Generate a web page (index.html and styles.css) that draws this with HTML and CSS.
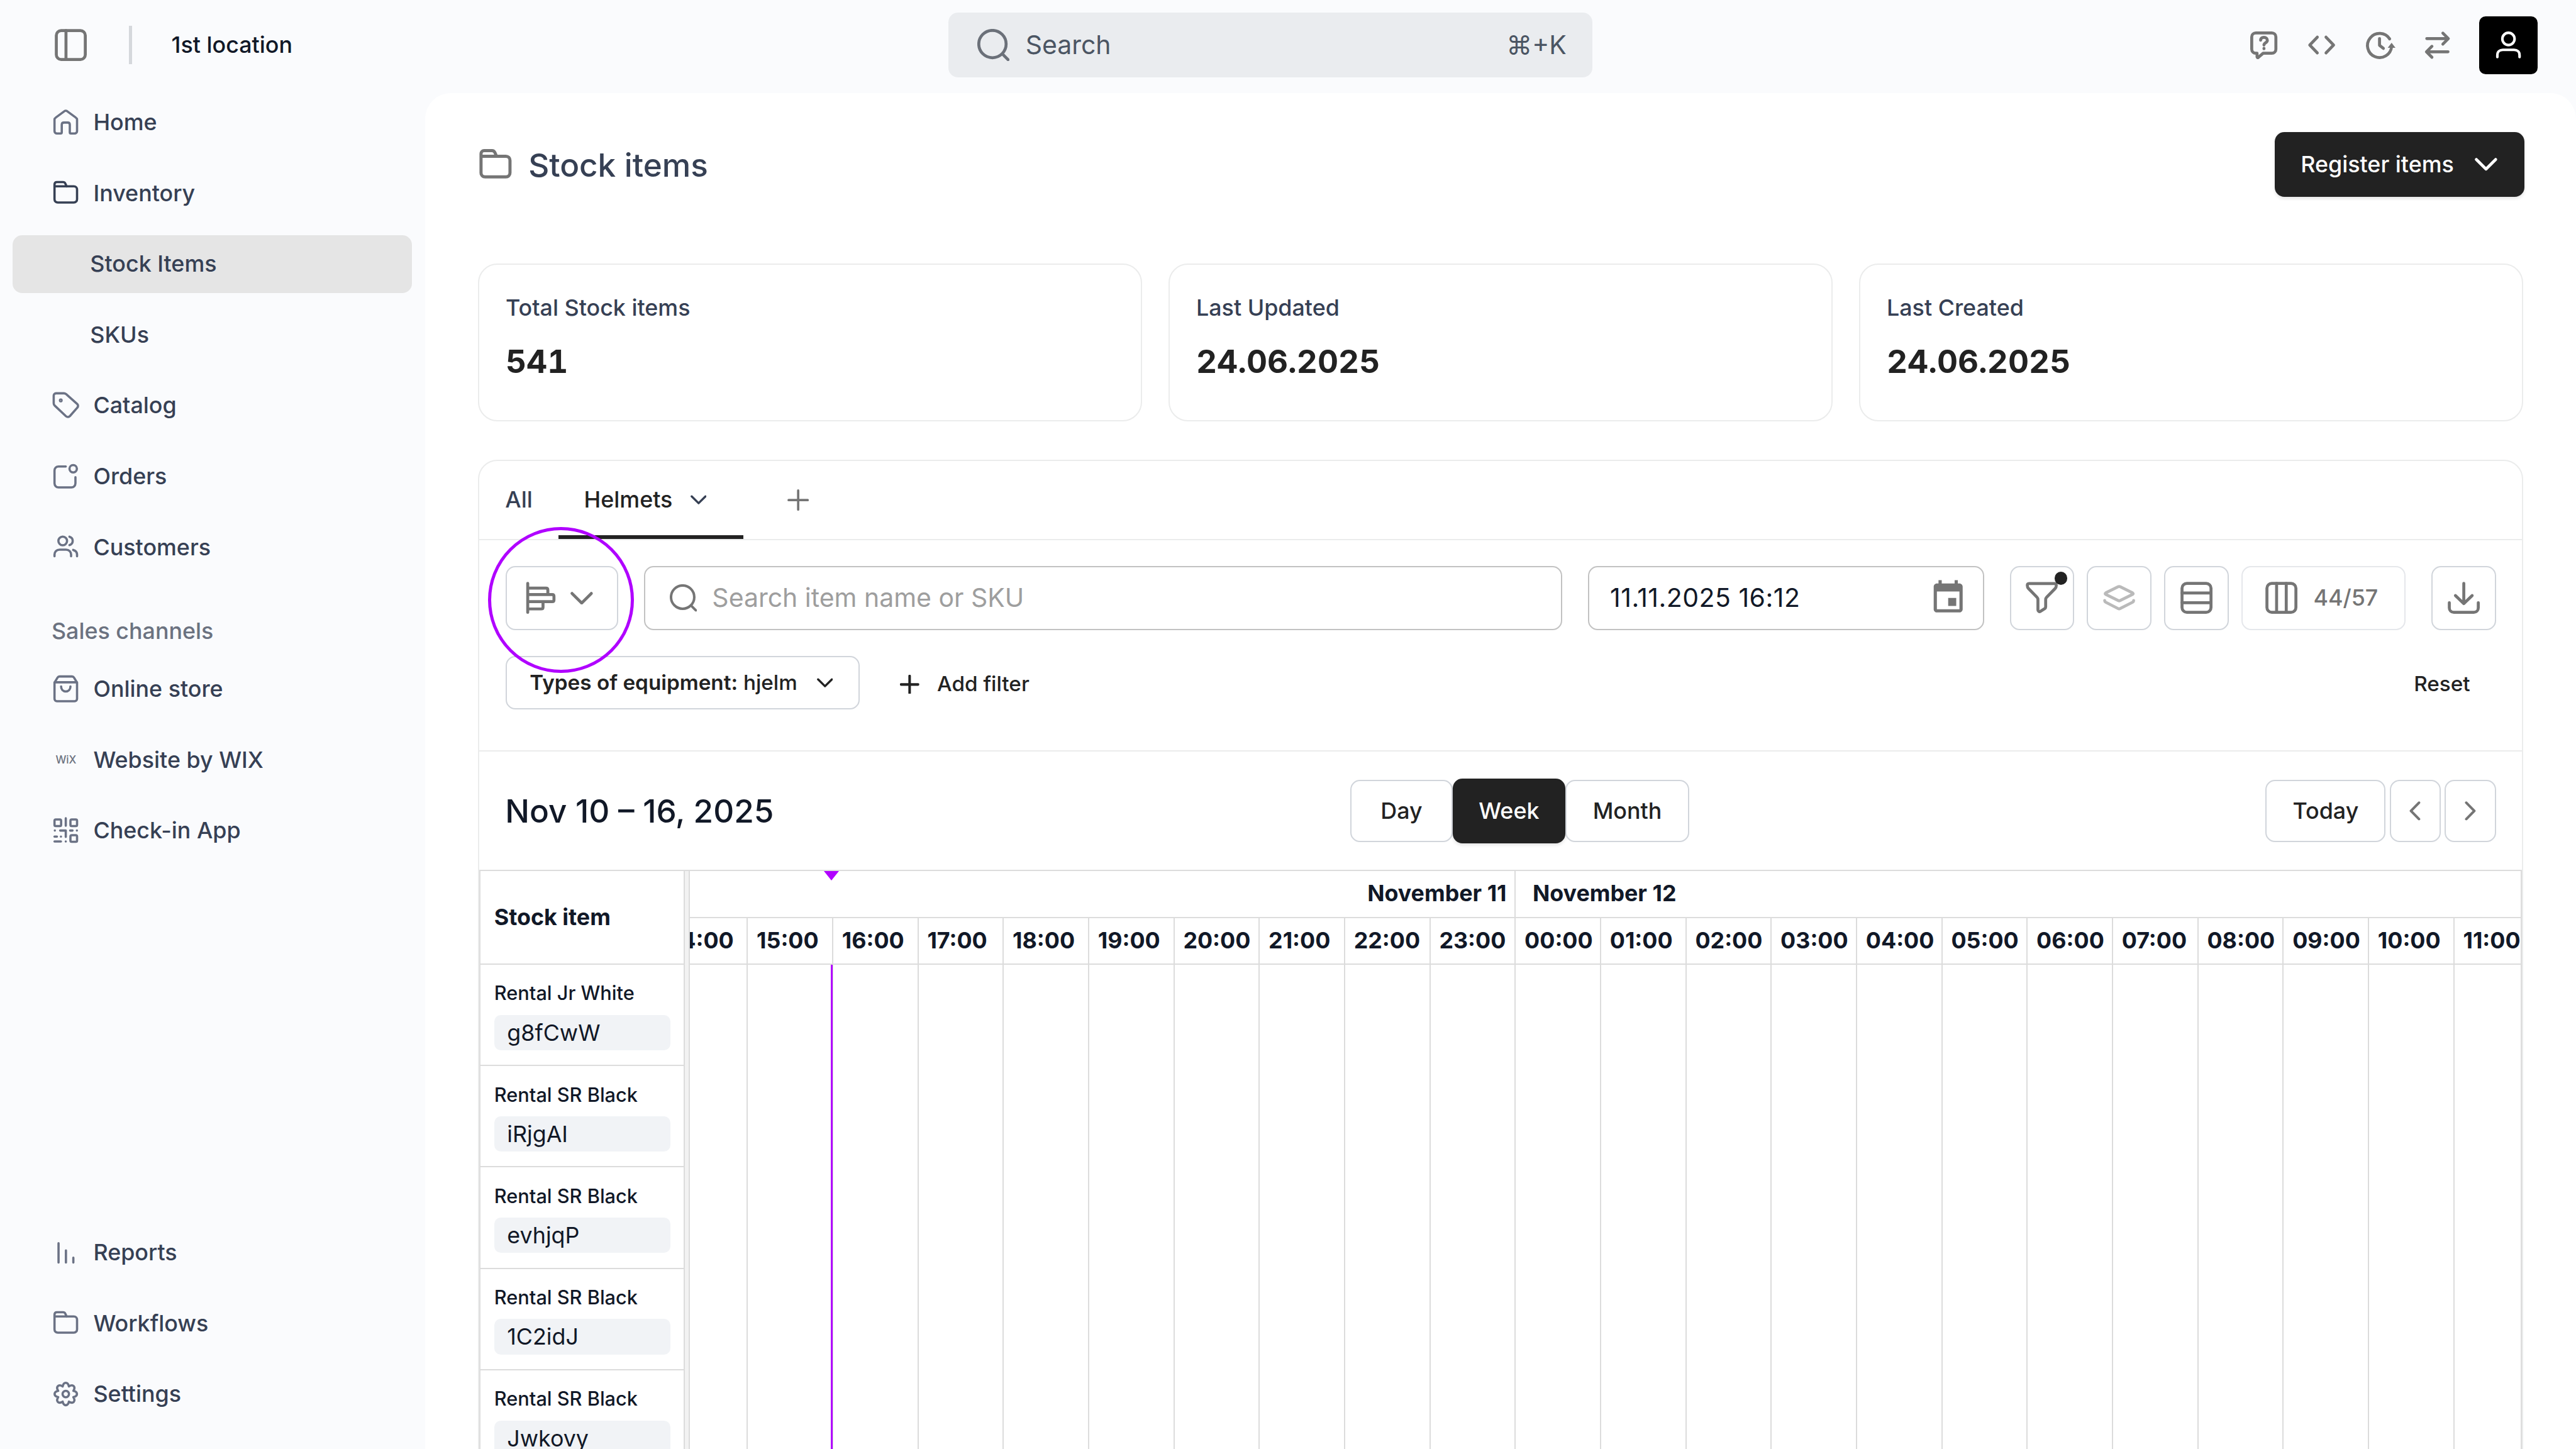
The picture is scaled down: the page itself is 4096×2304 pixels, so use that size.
FILE: index.html
```html
<!DOCTYPE html>
<html lang="en">
<head>
  <meta charset="UTF-8">
  <title>Stock items</title>
  <meta name="viewport" content="width=device-width, initial-scale=1.0">
  <link rel="stylesheet" href="styles.css">
</head>
<body>
  <!-- icon sprite -->
  <svg class="sprite" aria-hidden="true">
    <symbol id="i-panel" viewBox="0 0 20 20"><rect x="1" y="1" width="18" height="18" rx="3"/><path d="M7 1v18"/></symbol>
    <symbol id="i-home" viewBox="0 0 20 20"><path d="M3 8.3c0-.6.3-1 .8-1.3l5.6-4.1c.4-.2.8-.2 1.2 0L16.2 7c.5.3.8.7.8 1.3v7.1c0 .9-.7 1.5-1.5 1.5h-2.3c-.4 0-.7-.3-.7-.7v-4.8c0-.8-.5-1.3-1.3-1.3H8.8c-.8 0-1.3.5-1.3 1.3v4.8c0 .4-.3.7-.7.7H4.5c-.8 0-1.5-.6-1.5-1.5z"/></symbol>
    <symbol id="i-folder" viewBox="0 0 20 20"><path d="M3 5.6v8c0 1.2.8 2 2 2h10c1.2 0 2-.8 2-2v-6c0-1.2-.8-2-2-2H3M3 5.6V4.4c0-.9.6-1.5 1.5-1.5h3.8c.6 0 1.1.3 1.4.9l.8 1.8"/></symbol>
    <symbol id="i-tag" viewBox="0 0 20 20"><path d="M3.9 2.5h5c.5 0 .9.2 1.3.5l6.9 6.1c.7.7.7 1.7 0 2.4l-4.5 5.1c-.7.7-1.7.8-2.4.2L3.1 10.1c-.4-.4-.6-.9-.6-1.4V3.9c0-.8.6-1.4 1.4-1.4z"/><circle cx="6.9" cy="6.9" r=".5"/></symbol>
    <symbol id="i-orders" viewBox="0 0 20 20"><path d="M10 3.8H5.5C4.1 3.8 3 4.9 3 6.3v8c0 1.4 1.1 2.5 2.5 2.5h8c1.4 0 2.5-1.1 2.5-2.5v-3.8"/><circle cx="14.6" cy="5.2" r="2.3"/></symbol>
    <symbol id="i-users" viewBox="0 0 20 20"><circle cx="8.1" cy="5.9" r="2.7"/><path d="M3 15.4v-1c0-1.8 1.3-3.1 3.1-3.1h4.1c1.8 0 3.1 1.3 3.1 3.1v1M12.3 3.3c1.2.3 2 1.3 2 2.6s-.8 2.3-2 2.6M14.6 11.5c1.4.4 2.4 1.5 2.4 2.9v1"/></symbol>
    <symbol id="i-bag" viewBox="0 0 20 20"><path d="M3 6l1.9-3.1c.3-.5.7-.7 1.2-.7h7.8c.5 0 .9.2 1.2.7L17 6v10c0 .9-.6 1.6-1.5 1.6h-11C3.6 17.6 3 16.9 3 16zM3 5.8h14M7.1 8.4c0 1.9 1.2 3.1 2.9 3.1s2.9-1.2 2.9-3.1"/></symbol>
    <symbol id="i-qr" viewBox="0 0 20 20"><rect x="3" y="3.1" width="4.1" height="4.1" rx=".8"/><rect x="12.9" y="3.1" width="4.1" height="4.1" rx=".8"/><rect x="12.9" y="12.9" width="4.1" height="4.1" rx=".8"/><path d="M10 2.4V7M3.2 10h0M6.5 10H10v4M12.7 10h1.5M16.9 10h0M3 13.8h1.5M7 13.8h0M3 16.8h4M10 16.8h0"/></symbol>
    <symbol id="i-bars" viewBox="0 0 20 20"><path d="M5.5 4.2v12M10.1 8.7v7.5M14.7 13.2v3"/></symbol>
    <symbol id="i-gear" viewBox="-10 -10 20 20"><path d="M4.71-1.95C7.7-1.3 7.7 1.3 4.71 1.95C6.36 4.53 4.53 6.36 1.95 4.71C1.3 7.7-1.3 7.7-1.95 4.71C-4.53 6.36-6.36 4.53-4.71 1.95C-7.7 1.3-7.7-1.3-4.71-1.95C-6.36-4.53-4.53-6.36-1.95-4.71C-1.3-7.7 1.3-7.7 1.95-4.71C4.53-6.36 6.36-4.53 4.71-1.95z"/><circle r="2"/></symbol>
    <symbol id="i-search" viewBox="0 0 20 20"><circle cx="9.4" cy="9.4" r="8.5"/><path d="M15.9 15.9l3.2 3.2"/></symbol>
    <symbol id="i-help" viewBox="0 0 20 20"><path d="M5 2.5h10c1.4 0 2.5 1.1 2.5 2.5v7.6c0 1.4-1.1 2.5-2.5 2.5H9.6l-3 2.6c-.4.3-.8.1-.8-.4v-2.2H5c-1.4 0-2.5-1.1-2.5-2.5V5c0-1.4 1.1-2.5 2.5-2.5zM8 7c.1-1.1.9-1.8 2.1-1.8s2.1.8 2.1 1.9c0 1.5-2.1 1.5-2.1 2.9M10.1 12.1v.2"/></symbol>
    <symbol id="i-code" viewBox="0 0 20 20"><path d="M7.3 5.1L2.6 10l4.7 4.9M12.7 5.1l4.7 4.9-4.7 4.9"/></symbol>
    <symbol id="i-clock" viewBox="0 0 20 20"><path d="M16.3 6.2a7.5 7.5 0 1 0 1.2 4.8M10 6v4.2l2.4 1.9"/><path class="fill" d="M15.1 11.7l2.4-3.1 2.4 3.1z"/></symbol>
    <symbol id="i-swap" viewBox="0 0 20 20"><path d="M3.4 6h13.2M13.4 2.6L16.8 6l-3.4 3.4M16.6 14.2H3.4M6.6 10.8l-3.4 3.4 3.4 3.4"/></symbol>
    <symbol id="i-user" viewBox="0 0 20 20"><circle cx="10" cy="6.2" r="3.8"/><path d="M3.1 17.5v-1.2c0-2 1.4-3.3 3.4-3.3h7c2 0 3.4 1.3 3.4 3.3v1.2"/></symbol>
    <symbol id="i-down" viewBox="0 0 14 8"><path d="M1 1l6 6 6-6"/></symbol>
    <symbol id="i-left" viewBox="0 0 7 12"><path d="M6 .9L1 6l5 5.1"/></symbol>
    <symbol id="i-right" viewBox="0 0 7 12"><path d="M1 .9L6 6l-5 5.1"/></symbol>
    <symbol id="i-plus" viewBox="0 0 14 14"><path d="M7 .8v12.4M.8 7h12.4"/></symbol>
    <symbol id="i-gantt" viewBox="0 0 20 20"><path d="M2 1v18M2 4h11.3c.8 0 1.2.4 1.2 1.2V8M2 8h15.2c.7 0 1.1.4 1.1 1.1v2.2c0 .7-.4 1.1-1.1 1.1H2M2 16.9h8.4c.7 0 1.1-.4 1.1-1.1v-3.2"/></symbol>
    <symbol id="i-calendar" viewBox="0 0 24 24"><path class="fill" d="M17 12h-5v5h5v-5zM16 1v2H8V1H6v2H5c-1.11 0-1.99.9-1.99 2L3 19c0 1.1.89 2 2 2h14c1.1 0 2-.9 2-2V5c0-1.1-.9-2-2-2h-1V1h-2zm3 18H5V8h14v11z"/></symbol>
    <symbol id="i-funnel" viewBox="0 0 20 20"><path d="M1 2.2c0-.7.3-1.1 1-1.1h16c.7 0 1 .4 1 1.1 0 .9-.2 1.5-.8 2.1L13 9.6c-.5.5-.6.9-.6 1.6v4.4c0 .5-.2.8-.6 1.1l-2.6 1.7c-.8.5-1.6 0-1.6-.9v-6.3c0-.7-.1-1.1-.6-1.6L1.8 4.3C1.2 3.7 1 3.1 1 2.2z"/></symbol>
    <symbol id="i-layers" viewBox="0 0 20 20"><path d="M9.4 3.1L1.7 6.9c-.5.3-.5.7 0 1l7.7 3.8c.4.2.8.2 1.2 0l7.7-3.8c.5-.3.5-.7 0-1l-7.7-3.8c-.4-.2-.8-.2-1.2 0zM1 11.7c0 .5.3.8.8 1.1l7.6 3.9c.4.2.8.2 1.2 0l7.6-3.9c.5-.3.8-.6.8-1.1"/></symbol>
    <symbol id="i-rows" viewBox="0 0 20 20"><rect x="1" y="1" width="18" height="18" rx="3"/><path d="M1 7h18M1 13h18"/></symbol>
    <symbol id="i-cols" viewBox="0 0 20 20"><rect x="1" y="1" width="18" height="18" rx="3"/><path d="M7 1v18M13 1v18"/></symbol>
    <symbol id="i-download" viewBox="0 0 20 20"><path d="M10 1v12M4.8 8.6L10 13.6l5.2-5M1 13v3.2C1 17.8 2.2 19 3.8 19h12.4c1.6 0 2.8-1.2 2.8-2.8V13"/></symbol>
  </svg>

  <header class="topbar">
    <div class="topbar-left">
      <svg class="icon s20"><use href="#i-panel"/></svg>
      <span class="divider"></span>
      <span class="location">1st location</span>
    </div>
    <div class="global-search">
      <svg class="icon s20"><use href="#i-search"/></svg>
      <span>Search</span>
      <span class="shortcut">⌘+K</span>
    </div>
    <div class="topbar-right">
      <svg class="icon s20"><use href="#i-help"/></svg>
      <svg class="icon s20"><use href="#i-code"/></svg>
      <svg class="icon s20"><use href="#i-clock"/></svg>
      <svg class="icon s20"><use href="#i-swap"/></svg>
      <div class="avatar"><svg class="icon s20"><use href="#i-user"/></svg></div>
    </div>
  </header>

  <div class="layout">
    <nav class="sidebar">
      <a class="nav-item"><svg class="icon s20"><use href="#i-home"/></svg>Home</a>
      <a class="nav-item open"><svg class="icon s20"><use href="#i-folder"/></svg>Inventory</a>
      <a class="nav-item sub active">Stock Items</a>
      <a class="nav-item sub">SKUs</a>
      <a class="nav-item"><svg class="icon s20"><use href="#i-tag"/></svg>Catalog</a>
      <a class="nav-item"><svg class="icon s20"><use href="#i-orders"/></svg>Orders</a>
      <a class="nav-item"><svg class="icon s20"><use href="#i-users"/></svg>Customers</a>
      <div class="nav-title">Sales channels</div>
      <a class="nav-item"><svg class="icon s20"><use href="#i-bag"/></svg>Online store</a>
      <a class="nav-item"><span class="wix">WiX</span>Website by WIX</a>
      <a class="nav-item"><svg class="icon s20"><use href="#i-qr"/></svg>Check-in App</a>
      <div class="nav-bottom">
        <a class="nav-item"><svg class="icon s20"><use href="#i-bars"/></svg>Reports</a>
        <a class="nav-item"><svg class="icon s20"><use href="#i-folder"/></svg>Workflows</a>
        <a class="nav-item"><svg class="icon s20"><use href="#i-gear"/></svg>Settings</a>
      </div>
    </nav>

    <main class="content">
      <div class="page-head">
        <svg class="icon title-icon"><use href="#i-folder"/></svg>
        <h1>Stock items</h1>
        <button class="btn-dark register">Register items <svg class="icon chev"><use href="#i-down"/></svg></button>
      </div>

      <div class="stats">
        <div class="stat"><p>Total Stock items</p><strong>541</strong></div>
        <div class="stat"><p>Last Updated</p><strong>24.06.2025</strong></div>
        <div class="stat"><p>Last Created</p><strong>24.06.2025</strong></div>
      </div>

      <section class="panel">
        <div class="tabs">
          <span class="tab">All</span>
          <span class="tab current">Helmets <svg class="icon chev-sm"><use href="#i-down"/></svg></span>
          <svg class="icon tab-add"><use href="#i-plus"/></svg>
        </div>

        <div class="filters">
          <div class="filter-row">
            <div class="view-select">
              <svg class="icon s20"><use href="#i-gantt"/></svg>
              <svg class="icon chev"><use href="#i-down"/></svg>
              <span class="ring"></span>
            </div>
            <div class="field search-field">
              <svg class="icon s17"><use href="#i-search"/></svg>
              <span class="placeholder">Search item name or SKU</span>
            </div>
            <div class="field date-field">
              <span class="date-value">11.11.2025 16:12</span>
              <svg class="icon s24"><use href="#i-calendar"/></svg>
            </div>
            <div class="tools">
              <div class="tool"><svg class="icon s20"><use href="#i-funnel"/></svg><span class="dot"></span></div>
              <div class="tool disabled"><svg class="icon s20"><use href="#i-layers"/></svg></div>
              <div class="tool"><svg class="icon s20"><use href="#i-rows"/></svg></div>
              <div class="tool columns"><svg class="icon s20"><use href="#i-cols"/></svg>44/57</div>
            </div>
            <div class="tool"><svg class="icon s20"><use href="#i-download"/></svg></div>
          </div>
          <div class="chip-row">
            <div class="chip"><span><b>Types of equipment:</b> hjelm</span><svg class="icon chev-sm"><use href="#i-down"/></svg></div>
            <div class="add-filter"><svg class="icon s12"><use href="#i-plus"/></svg>Add filter</div>
            <span class="reset">Reset</span>
          </div>
        </div>

        <div class="cal-head">
          <h2>Nov 10 – 16, 2025</h2>
          <div class="range">
            <button class="btn">Day</button>
            <button class="btn-dark">Week</button>
            <button class="btn">Month</button>
          </div>
          <div class="cal-nav">
            <button class="btn">Today</button>
            <button class="btn arrow"><svg class="icon arrow-icon"><use href="#i-left"/></svg></button>
            <button class="btn arrow"><svg class="icon arrow-icon"><use href="#i-right"/></svg></button>
          </div>
        </div>

        <div class="calendar">
          <div class="resources">
            <div class="res-head">Stock item</div>
            <div class="res"><p>Rental Jr White</p><span>g8fCwW</span></div>
            <div class="res"><p>Rental SR Black</p><span>iRjgAI</span></div>
            <div class="res"><p>Rental SR Black</p><span>evhjqP</span></div>
            <div class="res"><p>Rental SR Black</p><span>1C2idJ</span></div>
            <div class="res"><p>Rental SR Black</p><span>Jwkovy</span></div>
          </div>
          <div class="splitter"></div>
          <div class="timeline">
            <div class="days">
              <div class="day first">November 11</div>
              <div class="day">November 12</div>
            </div>
            <div class="hours">
              <span>14:00</span><span>15:00</span><span>16:00</span><span>17:00</span><span>18:00</span><span>19:00</span><span>20:00</span><span>21:00</span><span>22:00</span><span>23:00</span><span>00:00</span><span>01:00</span><span>02:00</span><span>03:00</span><span>04:00</span><span>05:00</span><span>06:00</span><span>07:00</span><span>08:00</span><span>09:00</span><span>10:00</span><span>11:00</span>
            </div>
            <div class="slots">
              <i></i><i></i><i></i><i></i><i></i><i></i><i></i><i></i><i></i><i></i><i></i><i></i><i></i><i></i><i></i><i></i><i></i><i></i><i></i><i></i><i></i><i></i>
            </div>
            <div class="now-arrow"></div>
            <div class="now-line"></div>
          </div>
        </div>
      </section>
    </main>
  </div>
</body>
</html>
```

FILE: styles.css
```css
/* 0.1rem = one layout pixel on a 1600x900 canvas */
html {
  font-size: 25.6px;
}
* {
  box-sizing: border-box;
}
body {
  margin: 0;
  width: 160rem;
  height: 90rem;
  overflow: hidden;
  display: flex;
  flex-direction: column;
  font-family: Inter, "Liberation Sans", sans-serif;
  font-size: 1.4rem;
  font-weight: 500;
  line-height: 2rem;
  color: #364054;
  background: #fafbfd;
}
h1, h2, p {
  margin: 0;
}
button {
  font: inherit;
  padding: 0;
}
.sprite {
  display: none;
}
.icon {
  display: block;
  flex: none;
  fill: none;
  stroke: currentColor;
  stroke-width: 1.85;
  stroke-linecap: round;
  stroke-linejoin: round;
  color: #757575;
}
.fill {
  fill: currentColor;
  stroke: none;
}
.s12 { width: 1.2rem; height: 1.2rem; }
.s17 { width: 1.7rem; height: 1.7rem; }
.s20 { width: 2rem; height: 2rem; }
.s24 { width: 2.4rem; height: 2.4rem; }
.chev { width: 1.4rem; height: .8rem; }
.chev-sm { width: 1rem; height: .6rem; }

/* top bar */
.topbar {
  flex: none;
  height: 5.8rem;
  padding-right: 2.4rem;
  display: flex;
  align-items: flex-start;
}
.topbar-left {
  width: 58.9rem;
  height: 5.6rem;
  padding-left: 3.4rem;
  display: flex;
  align-items: center;
}
.divider {
  width: .2rem;
  height: 2.4rem;
  margin: 0 2.45rem 0 2.6rem;
  background: #d5d8dc;
}
.location {
  color: #111827;
}
.global-search {
  width: 40rem;
  height: 4rem;
  margin-top: .8rem;
  padding: 0 1.6rem 0 1.8rem;
  display: flex;
  align-items: center;
  gap: 1rem;
  border-radius: .6rem;
  background: #eaecef;
  font-size: 1.6rem;
  font-weight: 400;
  color: #4b5563;
}
.global-search .icon {
  color: #6b7079;
}
.shortcut {
  margin-left: auto;
}
.topbar-right {
  height: 5.6rem;
  margin-left: auto;
  display: flex;
  align-items: center;
  gap: 1.6rem;
}
.avatar {
  width: 3.6rem;
  height: 3.6rem;
  display: flex;
  align-items: center;
  justify-content: center;
  border-radius: .4rem;
  background: #000;
}
.avatar .icon {
  color: #fff;
  stroke-width: 1.6;
}

.layout {
  flex: 1;
  min-height: 0;
  display: flex;
}

/* sidebar */
.sidebar {
  width: 26.4rem;
  padding: 0 .8rem 1.6rem;
  display: flex;
  flex-direction: column;
  gap: .8rem;
}
.nav-item {
  height: 3.6rem;
  padding-left: 2.3rem;
  display: flex;
  align-items: center;
  gap: .7rem;
  border-radius: .6rem;
}
.nav-item .icon {
  color: #6b7285;
  stroke-width: 1.4;
}
.nav-item.open .icon {
  color: #364054;
}
.nav-item.sub {
  padding-left: 4.8rem;
}
.nav-item.active {
  background: #e5e5e5;
}
.nav-title {
  height: 2rem;
  margin-top: 1.6rem;
  padding-left: 2.4rem;
  color: #6b7280;
}
.wix {
  width: 2rem;
  font-size: .66rem;
  text-align: center;
  color: #6b7280;
}
.nav-bottom {
  margin-top: auto;
  display: flex;
  flex-direction: column;
  gap: .8rem;
}

/* content */
.content {
  width: 133.6rem;
  padding: 2.4rem 3.2rem 0;
  display: flex;
  flex-direction: column;
  border-radius: 1.6rem 1.6rem 0 0;
  background: #fff;
}
.page-head {
  height: 4.04rem;
  display: flex;
  align-items: center;
}
.title-icon {
  width: 2.57rem;
  height: 2.57rem;
  margin: .1rem .74rem 0 -.09rem;
  stroke-width: 1.5;
}
.page-head h1 {
  padding-top: .05rem;
  font-size: 2rem;
  font-weight: 500;
}
.btn-dark {
  border: 0;
  border-radius: .6rem;
  background: #222;
  color: #fff;
  box-shadow: 0 .1rem .2rem rgba(0, 0, 0, .1);
}
.register {
  width: 15.5rem;
  height: 4.04rem;
  margin-left: auto;
  padding: 0 1.7rem 0 1.6rem;
  display: flex;
  align-items: center;
  justify-content: space-between;
}
.register .icon {
  color: #fff;
}
.stats {
  flex: none;
  height: 9.8rem;
  margin: 4.13rem .1rem 2.4rem;
  display: grid;
  grid-template-columns: repeat(3, 1fr);
  gap: 1.67rem;
}
.stat {
  padding: 1.66rem 1.63rem;
  border: .1rem solid #ebecec;
  border-radius: 1.2rem;
}
.stat strong {
  display: block;
  margin-top: .96rem;
  font-size: 2rem;
  font-weight: 700;
  font-variant-numeric: tabular-nums;
  line-height: 2.8rem;
  color: #222;
}

.panel {
  flex: 1;
  min-height: 0;
  margin: 0 .1rem;
  display: flex;
  flex-direction: column;
  border: .1rem solid #ebecec;
  border-bottom: 0;
  border-radius: 1.2rem 1.2rem 0 0;
}
.tabs {
  flex: none;
  height: 4.9rem;
  display: flex;
  align-items: stretch;
  border-bottom: .1rem solid #ebecec;
}
.tab {
  padding: 0 1.6rem;
  display: flex;
  align-items: center;
}
.tab.current {
  width: 11.5rem;
  padding-right: 2.3rem;
  justify-content: space-between;
  border-bottom: .25rem solid #222;
  border-top: .25rem solid transparent;
  color: #222;
}
.tab .icon {
  color: #364054;
}
.tab-add {
  width: 1.34rem;
  height: 1.34rem;
  margin: 1.75rem 0 0 2.75rem;
  stroke-width: 1.5;
}

.filters {
  flex: none;
  height: 13.15rem;
  padding: 1.6rem 1.6rem 0 1.63rem;
  border-bottom: .1rem solid #ebecec;
}
.filter-row {
  display: flex;
  gap: 1.6rem;
}
.view-select {
  position: relative;
  width: 7rem;
  height: 4rem;
  padding: 0 1.5rem 0 1.1rem;
  display: flex;
  align-items: center;
  justify-content: space-between;
  border: .1rem solid #d1d5db;
  border-radius: .6rem;
}
/* highlight around the view switcher */
.ring {
  position: absolute;
  top: -2.5rem;
  left: -1.17rem;
  width: 9.06rem;
  height: 9.06rem;
  border: .2rem solid #b000ff;
  border-radius: 50%;
}
.field {
  height: 4rem;
  display: flex;
  align-items: center;
  border: .1rem solid #c2c2c2;
  border-radius: .6rem;
  font-size: 1.6rem;
  font-weight: 400;
  color: #111827;
}
.search-field {
  flex: 1;
  padding-left: 1.5rem;
  gap: .95rem;
}
.placeholder {
  color: #9e9e9e;
}
.date-field {
  width: 24.6rem;
  padding: 0 .95rem 0 1.3rem;
  justify-content: space-between;
}
.date-value {
  letter-spacing: .012em;
}
.tools {
  display: flex;
  gap: .8rem;
}
.tool {
  position: relative;
  width: 4rem;
  height: 4rem;
  display: flex;
  align-items: center;
  justify-content: center;
  border: .1rem solid #d1d5db;
  border-radius: .6rem;
  color: #757575;
}
.tool.disabled .icon {
  color: #bababa;
}
.tool.columns {
  width: 10.2rem;
  padding-right: .25rem;
  gap: 1rem;
  border-color: #e5e7eb;
}
.dot {
  position: absolute;
  top: .3rem;
  right: .35rem;
  width: .8rem;
  height: .8rem;
  border-radius: 50%;
  background: #222;
}
.chip-row {
  margin-top: 1.6rem;
  height: 3.3rem;
  display: flex;
  align-items: center;
  font-size: 1.3rem;
  color: #222;
}
.chip-row .icon {
  color: #222;
}
.chip {
  width: 22rem;
  height: 3.3rem;
  padding: 0 1.6rem 0 1.42rem;
  display: flex;
  align-items: center;
  justify-content: space-between;
  border: .1rem solid #d1d5db;
  border-radius: .6rem;
}
.chip b {
  font-weight: 600;
}
.add-filter {
  margin-left: 2.5rem;
  padding-top: .2rem;
  display: flex;
  align-items: center;
  gap: 1.1rem;
}
.reset {
  margin-left: auto;
  padding: .2rem 1.6rem 0 0;
}

.cal-head {
  flex: none;
  height: 7.34rem;
  padding: 0 1.6rem;
  display: grid;
  grid-template-columns: 1fr auto 1fr;
  align-items: center;
}
.cal-head h2 {
  font-size: 2rem;
  font-weight: 500;
  color: #111827;
}
.btn {
  height: 3.85rem;
  border: .1rem solid #d1d5db;
  border-radius: .6rem;
  background: #fff;
  color: #222;
}
.range {
  display: flex;
  align-items: center;
  margin-left: 2.4rem;
}
.range .btn:first-child {
  width: 6.35rem;
}
.range .btn-dark {
  width: 7rem;
  height: 4.05rem;
}
.range .btn:last-child {
  width: 7.7rem;
}
.cal-nav {
  display: flex;
  justify-content: flex-end;
  gap: .24rem;
}
.cal-nav .btn {
  width: 7.47rem;
}
.cal-nav .arrow {
  width: 3.18rem;
  display: flex;
  align-items: center;
  justify-content: center;
}
.arrow-icon {
  width: .7rem;
  height: 1.2rem;
  stroke-width: 1.6;
}

/* calendar */
.calendar {
  flex: 1;
  min-height: 0;
  overflow: hidden;
  display: flex;
  border: .1rem solid #dcdcdc;
  border-bottom: 0;
  font-weight: 700;
  color: #111827;
}
.resources {
  width: 12.6rem;
}
.res-head {
  height: 5.8rem;
  padding-left: .84rem;
  display: flex;
  align-items: center;
  border-bottom: .1rem solid #dcdcdc;
}
.res {
  height: 6.3rem;
  padding: .76rem .8rem 0 .84rem;
  border-bottom: .1rem solid #dcdcdc;
  font-size: 1.2rem;
  font-weight: 500;
}
.res span {
  display: block;
  height: 2.2rem;
  margin-top: .36rem;
  padding-left: .8rem;
  border-radius: .4rem;
  background: #f1f3f6;
  font-size: 1.4rem;
  font-weight: 400;
  line-height: 2.2rem;
}
.splitter {
  width: .4rem;
  border: solid #dcdcdc;
  border-width: 0 .1rem;
  background: #f2f2f2;
}
.timeline {
  position: relative;
  flex: 1;
  min-width: 0;
  overflow: hidden;
  display: flex;
  flex-direction: column;
}
.days, .hours {
  flex: none;
  height: 2.9rem;
  display: flex;
  border-bottom: .1rem solid #dcdcdc;
  line-height: 2.8rem;
}
.day {
  padding-left: 1.04rem;
}
.day.first {
  width: 51.3rem;
  padding-right: .5rem;
  text-align: right;
  border-right: .1rem solid #dcdcdc;
}
.hours span, .slots i {
  flex: none;
  width: 5.3rem;
  border-right: .1rem solid #dcdcdc;
}
.hours span {
  padding-left: .54rem;
}
.hours span:first-child, .slots i:first-child {
  width: 3.6rem;
}
.hours span:first-child {
  padding: 0 .8rem 0 0;
  display: flex;
  justify-content: flex-end;
}
.hours span:last-child, .slots i:last-child {
  border-right: 0;
}
.slots {
  flex: 1;
  display: flex;
}
.now-arrow {
  position: absolute;
  top: 0;
  left: 8.3rem;
  border: solid transparent;
  border-width: .6rem .48rem 0;
  border-top-color: #b100ff;
}
.now-line {
  position: absolute;
  top: 5.8rem;
  bottom: 0;
  left: 8.75rem;
  width: .12rem;
  background: #b100ff;
}
```
